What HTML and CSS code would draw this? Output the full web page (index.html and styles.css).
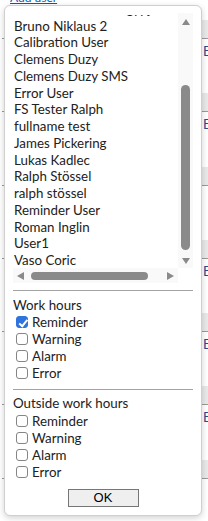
FILE: index.html
```html
<!DOCTYPE html>
<html lang="en">
<head>
  <meta charset="UTF-8" />
  <title>User filter</title>
  <link rel="stylesheet" href="styles.css">
</head>
<body>
  <div class="page">
    <div class="toolbar"><a class="add-link" href="#">Add user</a></div>
    <div class="table">
      <div class="head"><div class="band"></div></div>
      <div class="row"><div class="cell">E</div><div class="band"></div></div>
      <div class="row"><div class="cell">E</div><div class="band"></div></div>
      <div class="row"><div class="cell"></div><div class="band"></div></div>
      <div class="row"><div class="cell">E</div><div class="band"></div></div>
      <div class="row"><div class="cell">E</div><div class="band"></div></div>
      <div class="row"><div class="cell">E</div><div class="band"></div></div>
      <div class="row"><div class="cell"></div><div class="band"></div></div>
    </div>

    <div class="popup">
      <div class="listbox">
        <div class="items">
          <div class="items-inner">
            <div class="item">Bruno Niklaus Test gypj</div>
            <div class="item">Bruno Niklaus 2</div>
            <div class="item">Calibration User</div>
            <div class="item">Clemens Duzy</div>
            <div class="item">Clemens Duzy SMS</div>
            <div class="item">Error User</div>
            <div class="item">FS Tester Ralph</div>
            <div class="item">fullname test</div>
            <div class="item">James Pickering</div>
            <div class="item">Lukas Kadlec</div>
            <div class="item">Ralph Stössel</div>
            <div class="item">ralph stössel</div>
            <div class="item">Reminder User</div>
            <div class="item">Roman Inglin</div>
            <div class="item">User1</div>
            <div class="item">Vaso Coric</div>
            <div class="item">Zoran Test</div>
          </div>
        </div>
        <div class="vscroll">
          <span class="arrow up"></span>
          <span class="vthumb"></span>
          <span class="arrow down"></span>
        </div>
        <div class="hscroll">
          <span class="arrow left"></span>
          <span class="hthumb"></span>
          <span class="arrow right"></span>
        </div>
        <div class="corner"></div>
      </div>

      <hr class="sep">
      <div class="group">
        <div class="group-title">Work hours</div>
        <label class="check"><input type="checkbox" class="box" checked>Reminder</label>
        <label class="check"><input type="checkbox" class="box">Warning</label>
        <label class="check"><input type="checkbox" class="box">Alarm</label>
        <label class="check"><input type="checkbox" class="box">Error</label>
      </div>

      <hr class="sep">
      <div class="group">
        <div class="group-title">Outside work hours</div>
        <label class="check"><input type="checkbox" class="box">Reminder</label>
        <label class="check"><input type="checkbox" class="box">Warning</label>
        <label class="check"><input type="checkbox" class="box">Alarm</label>
        <label class="check"><input type="checkbox" class="box">Error</label>
      </div>

      <div class="actions"><button type="button" class="ok">OK</button></div>
    </div>
  </div>
</body>
</html>
```

FILE: styles.css
```css
body {
  margin: 0;
  font-family: 'Lato', sans-serif;
  font-size: 13.33px;
  color: #222;
  background: #fff;
}
.page {
  position: relative;
  width: 208px;
  height: 521px;
  overflow: hidden;
}

/* page behind the popup */
.toolbar {
  height: 20px;
  overflow: hidden;
}
.add-link {
  display: block;
  margin: -10px 0 0 10px;
  line-height: 15px;
  font-size: 12px;
  color: #0b57c2;
}
.table {
  margin-left: 2px;
}
.head {
  border-bottom: 1px solid #9a9a9a;
}
.band {
  height: 18px;
  margin-left: 8px;
  background: #e9e9e9;
}
.row {
  border-bottom: 1px solid #9a9a9a;
}
.cell {
  height: 50.25px;
  padding: 4px 0 0 201px;
  line-height: 16px;
  color: #1f4e96;
}

/* popup */
.popup {
  position: absolute;
  left: 4px;
  top: 5px;
  width: 198px;
  box-sizing: border-box;
  padding: 7px 8px 8px 8px;
  background: #fff;
  border: 1px solid #cfcfcf;
  border-radius: 6px;
  box-shadow: 0 2px 6px rgba(0, 0, 0, 0.18);
}
.listbox {
  display: grid;
  grid-template-columns: 165px 15px;
  grid-template-rows: 255px 15px;
  width: 180px;
}
.items {
  overflow: hidden;
  margin-top: 1.5px;
  padding-left: 1px;
}
.items-inner {
  margin-top: -13.6px;
}
.item {
  height: 16.75px;
  line-height: 16.75px;
  white-space: nowrap;
}
.vscroll {
  display: flex;
  flex-direction: column;
  align-items: center;
  padding-top: 6px;
  background: #f9f9f9;
}
.hscroll {
  display: flex;
  align-items: center;
  padding-left: 4px;
  background: #f9f9f9;
}
.corner {
  background: #fff;
}
.arrow {
  width: 0;
  height: 0;
  border: 0 solid transparent;
}
.arrow.up {
  border-width: 0 4px 6px 4px;
  border-bottom-color: #8a8a8a;
}
.arrow.down {
  margin-top: 8px;
  border-width: 6px 4px 0 4px;
  border-top-color: #8a8a8a;
}
.arrow.left {
  border-width: 4px 7px 4px 0;
  border-right-color: #8a8a8a;
}
.arrow.right {
  margin-left: 19px;
  border-width: 4px 0 4px 7px;
  border-left-color: #8a8a8a;
}
.vthumb {
  width: 9px;
  height: 165px;
  margin-top: 60px;
  border-radius: 5px;
  background: #8a8a8a;
}
.hthumb {
  width: 117px;
  height: 8px;
  margin-left: 7px;
  border-radius: 4px;
  background: #8a8a8a;
}

.sep {
  margin: 7px 0 0 0;
  border: 0;
  border-top: 1px solid #a3a3a3;
  width: 180px;
}
.group {
  margin-top: 5.5px;
}
.group-title {
  line-height: 17px;
}
.check {
  display: flex;
  align-items: center;
  height: 17px;
}
.box {
  appearance: none;
  position: relative;
  width: 12px;
  height: 12px;
  margin: 0 4px 0 3px;
  border: 1px solid #858585;
  border-radius: 3px;
  background: #fff;
}
.box:checked {
  background: #2f74dc;
  border-color: #2f74dc;
}
.box:checked::after {
  content: "";
  position: absolute;
  left: 3.5px;
  top: 0.5px;
  width: 3px;
  height: 6.5px;
  border: solid #fff;
  border-width: 0 2px 2px 0;
  transform: rotate(40deg);
}
.actions {
  display: flex;
  justify-content: center;
  margin-top: 8.5px;
}
.ok {
  width: 71px;
  height: 18px;
  padding: 0;
  font-family: 'Liberation Sans', sans-serif;
  font-size: 13px;
  color: #000;
  background: #efefef;
  border: 1px solid #767676;
  border-radius: 0;
}
```
